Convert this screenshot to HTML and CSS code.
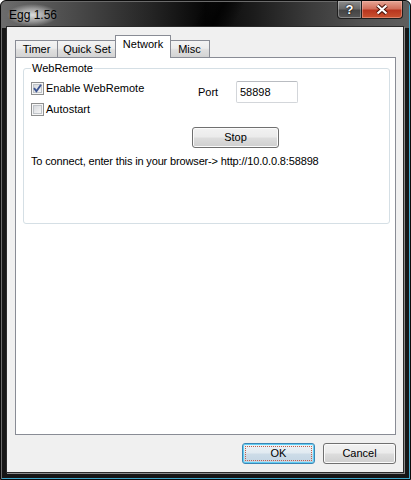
FILE: index.html
```html
<!DOCTYPE html>
<html>
<head>
<meta charset="utf-8">
<title>Egg 1.56</title>
<link rel="stylesheet" href="styles.css">
</head>
<body>
<div class="window">
    <div class="titlebar">
        <span class="title">Egg 1.56</span>
        <div class="caption">
            <span class="cap-btn help">?</span>
            <span class="cap-btn close">
                <svg width="14" height="11" viewBox="0 0 14 11">
                    <path d="M2.5 1.5 L11.5 9.5 M11.5 1.5 L2.5 9.5" stroke="#4a140a" stroke-width="4.2" fill="none"/>
                    <path d="M2.5 1.5 L11.5 9.5 M11.5 1.5 L2.5 9.5" stroke="#fff" stroke-width="2.2" fill="none"/>
                </svg>
            </span>
        </div>
    </div>

    <div class="client">
        <ul class="tabs">
            <li class="tab t-timer">Timer</li>
            <li class="tab t-quick">Quick Set</li>
            <li class="tab t-network selected">Network</li>
            <li class="tab t-misc">Misc</li>
        </ul>

        <div class="panel">
            <fieldset class="group">
                <legend>WebRemote</legend>
                <div class="top-row">
                    <div class="checks">
                        <label class="check">
                            <span class="box">
                                <svg width="11" height="11" viewBox="0 0 11 11">
                                    <path d="M2 5.2 L4.4 8.2 L9 1.8" stroke="#3d5592" stroke-width="1.9" fill="none"/>
                                </svg>
                            </span>
                            Enable WebRemote
                        </label>
                        <label class="check">
                            <span class="box"></span>
                            Autostart
                        </label>
                    </div>
                    <div class="port">
                        <span class="port-label">Port</span>
                        <span class="textbox">58898</span>
                    </div>
                </div>
                <div class="stop-row">
                    <span class="button stop">Stop</span>
                </div>
                <p class="connect">To connect, enter this in your browser-&gt; http://10.0.0.8:58898</p>
            </fieldset>
        </div>

        <div class="footer">
            <span class="button default"><span class="focus">OK</span></span>
            <span class="button">Cancel</span>
        </div>
    </div>
</div>
</body>
</html>
```

FILE: styles.css
```css
* {
    margin: 0;
    padding: 0;
    box-sizing: border-box;
}

body {
    background: #fff;
    font-family: "Liberation Sans", Arial, sans-serif;
    font-size: 11px;
    color: #000;
}

/* window frame (vista black glass) */
.window {
    width: 411px;
    height: 480px;
    display: flex;
    flex-direction: column;
    padding: 0 7px 7px 6px;
    border: 1px solid #0b0b0b;
    border-radius: 6px 6px 0 0;
    background:
        linear-gradient(118deg, transparent 48%, rgba(0,0,0,.75) 53%, transparent 58%) top / 100% 27px no-repeat,
        linear-gradient(to right, #6c6c6c 0%, #4a4a4a 18%, #262626 36%, #060606 50%, #1c1c1c 62%, #3c3c3c 76%, #525252 88%, #5e5e5e 100%) top / 100% 27px no-repeat,
        #161616;
    box-shadow: inset 1px 1px 0 #6a6a6a, inset -1px -1px 0 #3fa6c9;
}

.titlebar {
    height: 26px;
    display: flex;
    justify-content: space-between;
}

.title {
    align-self: center;
    margin-top: 2px;
    padding: 4px 14px 4px 2px;
    font-size: 12px;
    color: #000;
    background: radial-gradient(ellipse closest-side at 40% 50%, rgba(228,228,228,.95), rgba(200,200,200,.55) 60%, rgba(160,160,160,0));
}

.caption {
    display: flex;
    height: 18px;
}

.cap-btn {
    display: flex;
    align-items: center;
    justify-content: center;
    height: 18px;
    border: 1px solid #1e1e1e;
    border-top: none;
    color: #fff;
}

.help {
    width: 25px;
    border-radius: 0 0 0 4px;
    font-weight: bold;
    font-size: 13px;
    text-shadow: 0 0 2px #000, 0 0 1px #000;
    background: linear-gradient(#8c8c8c 0, #6a6a6a 45%, #454545 55%, #565656 100%);
    box-shadow: inset 0 0 0 1px rgba(255,255,255,.3);
}

.close {
    width: 41px;
    border-left: none;
    border-radius: 0 0 4px 0;
    background: linear-gradient(#e7a594 0, #d2705c 45%, #b9361f 55%, #c9522f 100%);
    box-shadow: inset 0 0 0 1px rgba(255,200,190,.4);
}

/* client area */
.client {
    flex: 1;
    display: flex;
    flex-direction: column;
    padding: 8px 7px 8px 8px;
    background: #f0f0f0;
    box-shadow: 0 0 0 1px #2a2a2a, 1px 1px 0 1px #8a8a8a;
}

.tabs {
    display: flex;
    align-items: flex-end;
    height: 22px;
    list-style: none;
}

.tab {
    height: 17px;
    border: 1px solid #898c95;
    border-bottom: none;
    text-align: center;
    line-height: 15px;
    padding-top: 1px;
    background: linear-gradient(#f3f3f3 0, #ececec 45%, #dfdfdf 55%, #d3d3d3 100%);
}

.t-timer { width: 43px; }
.t-quick { width: 60px; margin-left: -1px; }
.t-network { width: 56px; }
.t-misc { width: 41px; }

.tab.selected {
    position: relative;
    z-index: 1;
    height: 23px;
    margin: 0 -2px -1px -2px;
    padding-top: 1px;
    background: #fff;
}

.panel {
    flex: 1;
    padding: 4px 5px 0 7px;
    border: 1px solid #898c95;
    background: #fff;
}

/* group box */
.group {
    height: 162px;
    padding: 0 0 0 7px;
    border: 1px solid #d5dfe5;
    border-radius: 3px;
}

.group legend {
    padding: 0 1px;
    line-height: 13px;
}

.top-row {
    display: flex;
    margin-top: 6px;
}

.checks {
    width: 167px;
    display: flex;
    flex-direction: column;
    gap: 8px;
    padding-top: 1px;
}

.check {
    display: flex;
    align-items: center;
    height: 13px;
    line-height: 13px;
}

.box {
    width: 13px;
    height: 13px;
    margin-right: 2px;
    display: flex;
    align-items: center;
    justify-content: center;
    border: 1px solid #8e8f8f;
    background: linear-gradient(135deg, #cdd1d6 0, #e9eaec 55%, #fbfbfb 100%);
    box-shadow: inset 0 0 0 1px #f6f6f6, inset 0 0 0 2px #bfc3c8;
}

.port {
    display: flex;
    align-items: center;
    height: 22px;
}

.port-label {
    width: 38px;
}

.textbox {
    width: 62px;
    height: 22px;
    padding-left: 3px;
    line-height: 20px;
    border: 1px solid #d3d6da;
    border-top-color: #b9bcc1;
    border-radius: 2px;
}

.stop-row {
    margin-top: 11px;
    padding-left: 161px;
}

.connect {
    margin-top: 7px;
    line-height: 13px;
    letter-spacing: -0.15px;
}

/* push buttons */
.button {
    display: inline-block;
    height: 21px;
    text-align: center;
    line-height: 19px;
    border: 1px solid #707070;
    border-radius: 3px;
    background: linear-gradient(#f2f2f2 0, #ebebeb 48%, #dddddd 52%, #cfcfcf 100%);
    box-shadow: inset 0 0 0 1px #fbfbfb;
}

.stop {
    width: 87px;
}

.footer {
    display: flex;
    justify-content: flex-end;
    gap: 8px;
    margin-top: 8px;
}

.footer .button {
    width: 73px;
}

.button.default {
    padding: 2px;
    border-color: #3a86b6;
    background: linear-gradient(#edf3f7 0, #e1eaf1 48%, #cddce8 52%, #c3d5e4 100%);
    box-shadow: inset 0 0 0 1px #62cdf2;
}

.focus {
    display: block;
    height: 15px;
    line-height: 13px;
    border: 1px dotted #c0604c;
}
```
